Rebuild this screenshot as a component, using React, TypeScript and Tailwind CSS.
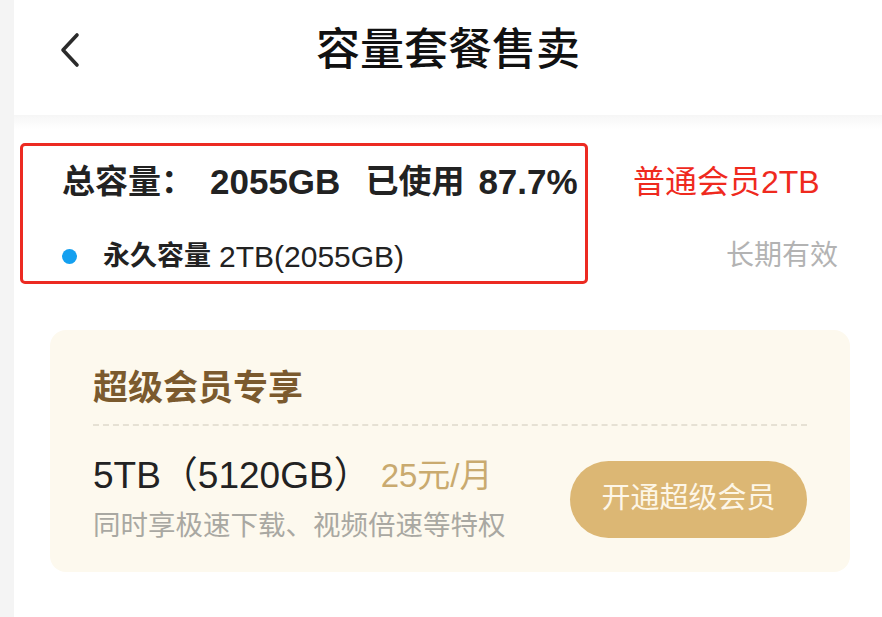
const font = { fontFamily: '"Liberation Sans", "Noto Sans CJK SC", sans-serif' };
const cjk = { fontFamily: '"Noto Sans CJK SC", sans-serif' };

function BackIcon() {
  return (
    <svg width="22" height="36" viewBox="0 0 22 36" fill="none">
      <path d="M18 3 L4 18 L18 33" stroke="#2b2b2b" strokeWidth="3.6" strokeLinecap="round" strokeLinejoin="round" />
    </svg>
  );
}

function UsageBox() {
  return (
    <div className="ml-[6px] flex h-[141px] w-[568px] flex-col rounded-[5px] border-[3px] border-[#ec2a22] pl-[39px] pt-[16px]">
      <div className="flex h-[40px] items-center text-[33px] font-bold text-[#222]">
        <span>总容量：</span>
        <span className="ml-[16px] text-[35px]">2055GB</span>
        <span className="ml-[25px]">已使用</span>
        <span className="ml-[14px] text-[35px]">87.7%</span>
      </div>
      <div className="mt-[34px] flex h-[40px] items-center text-[27px] text-[#222]">
        <span className="h-[15px] w-[15px] rounded-full bg-[#14a0f0]" />
        <span className="ml-[26px] font-bold">永久容量</span>
        <span className="ml-[8px] text-[30px]">2TB(2055GB)</span>
      </div>
    </div>
  );
}

function SuperCard() {
  return (
    <div className="ml-[36px] mr-[32px] mt-[46px] rounded-[16px] bg-[#fdf9ee] px-[43px] pb-[28px] pt-[30px]">
      <div className="flex h-[50px] items-center text-[35px] font-bold text-[#7b5a2e]" style={cjk}>超级会员专享</div>
      <div className="mt-[14px] border-t-2 border-dashed border-[#e6e1d4]" />
      <div className="mt-[28px] flex items-center justify-between">
        <div className="flex flex-col">
          <div className="flex h-[44px] items-center">
            <span className="text-[37px] text-[#222]">5TB（5120GB）</span>
            <span className="ml-[10px] text-[33px] text-[#c9aa6f]">25元/月</span>
          </div>
          <div className="mt-[10px] flex h-[36px] items-center text-[27.5px] text-[#a9a8a2]">同时享极速下载、视频倍速等特权</div>
        </div>
        <button className="flex h-[77px] w-[237px] items-center justify-center rounded-full bg-[#dcb774] text-[29px] text-[#fdf6e7]">
          开通超级会员
        </button>
      </div>
    </div>
  );
}

export default function App() {
  return (
    <div className="flex h-[617px] w-[882px] overflow-hidden bg-white" style={font}>
      <div className="w-[14px] shrink-0 bg-[#f4f4f4]" />
      <div className="flex flex-1 flex-col">
        <div className="relative flex h-[115px] items-start justify-center pt-[20px]">
          <div className="absolute left-[45px] top-[32px]">
            <BackIcon />
          </div>
          <span className="text-[44px] font-medium leading-[52px] text-[#111]" style={cjk}>容量套餐售卖</span>
        </div>
        <div className="h-[14px] bg-gradient-to-b from-[#f6f6f6] to-white" />
        <div className="mt-[14px] flex">
          <UsageBox />
          <div className="flex flex-1 flex-col pl-[45px] pr-[44px] pt-[19px]">
            <div className="flex h-[40px] items-center text-[32px] text-[#ef2a1e]">普通会员2TB</div>
            <div className="mt-[34px] flex h-[40px] items-center justify-end text-[28px] text-[#b3b3b3]">长期有效</div>
          </div>
        </div>
        <SuperCard />
      </div>
    </div>
  );
}
